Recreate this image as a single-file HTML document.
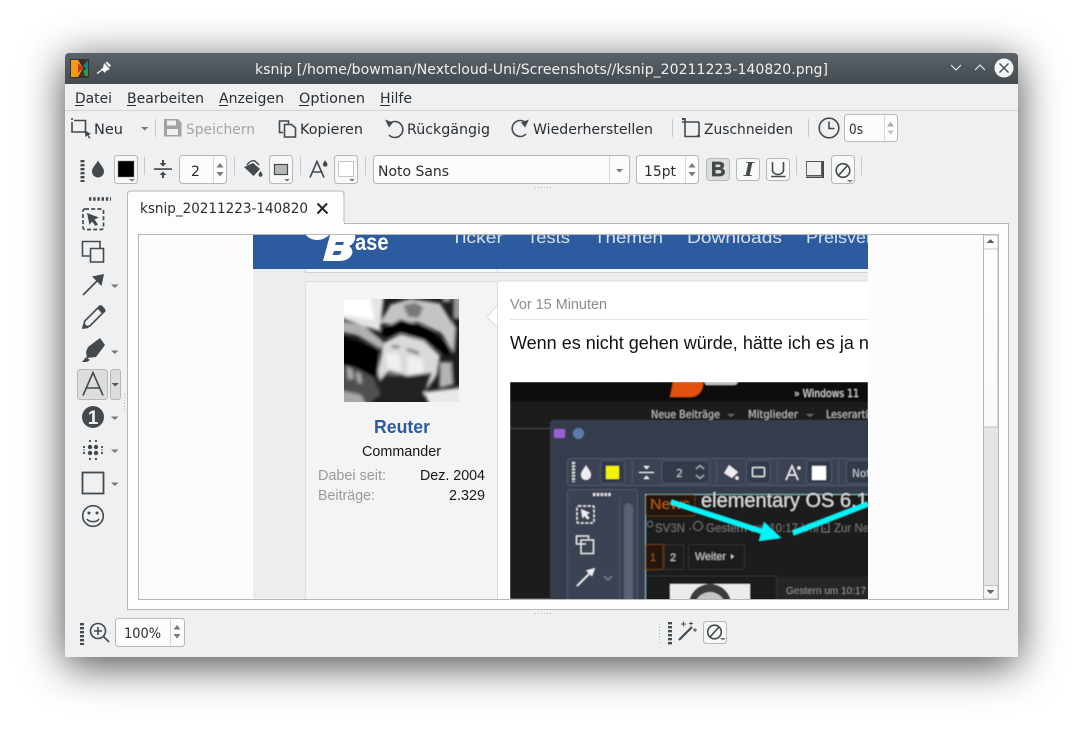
<!DOCTYPE html>
<html><head><meta charset="utf-8"><title>ksnip</title>
<style>
html,body{margin:0;padding:0;width:1083px;height:734px;overflow:hidden;background:#fff}
#win{position:absolute;left:65px;top:53px;width:953px;height:604px;border-radius:4px 4px 0 0;background:#eff0f1;box-shadow:0 8px 42px rgba(0,0,0,.72)}
svg{position:absolute;left:0;top:0}
text{font-family:"DejaVu Sans",sans-serif;font-size:14.5px;fill:#2b2e31;white-space:pre}
.btn{fill:#f7f8f8;stroke:#b5b7b9}
.field{fill:#fcfcfc;stroke:#b5b7b9}
.sep{stroke:#c6c8ca;stroke-width:1}
.ic{fill:none;stroke:#45494c;stroke-width:1.6}
.f{fill:#45494c}
.g{fill:#75787a}
.dots{stroke:#45494c;stroke-width:4;stroke-dasharray:2.4 1.6;fill:none}
</style></head><body>
<div id="win"></div>
<svg width="1083" height="734" viewBox="0 0 1083 734" xmlns="http://www.w3.org/2000/svg">
<defs>
<linearGradient id="tb" x1="0" y1="0" x2="0" y2="1"><stop offset="0" stop-color="#5a6369"/><stop offset="1" stop-color="#434a50"/></linearGradient>
<linearGradient id="tr" x1="0" y1="0" x2="0" y2="1"><stop offset="0" stop-color="#fff"/><stop offset="1" stop-color="#f3f4f4"/></linearGradient>
<filter id="bl" x="-10%" y="-10%" width="120%" height="120%"><feGaussianBlur stdDeviation="5"/></filter>
<filter id="b1"><feGaussianBlur stdDeviation=".4"/></filter>
<clipPath id="cw"><path d="M65 84V57a4 4 0 0 1 4-4H1014a4 4 0 0 1 4 4V84z"/></clipPath>
<clipPath id="cc"><rect x="253" y="235" width="615" height="364"/></clipPath>
<clipPath id="ca"><rect x="344" y="299" width="115" height="103"/></clipPath>
<clipPath id="cd"><rect x="510" y="382" width="358" height="217"/></clipPath>
</defs>

<!-- title bar -->
<rect x="65" y="53" width="953" height="31" fill="url(#tb)" clip-path="url(#cw)"/>
<rect x="70" y="59" width="19" height="19" fill="#3a3030"/>
<path d="M71 60h7l5 8-5 9h-7z" fill="#f59a12"/>
<path d="M78 63l5 5-5 5z" fill="#c9351e"/>
<path d="M83 66l5-6v11l-2-2z" fill="#0c8a86"/>
<path d="M83 71l5-3v8h-3z" fill="#2a9c4b"/>
<path d="M104 63l6 6-4 2-1 2-4-4 2-1zM107 61.500l4 4-1.500 1.500-4-4z" fill="#fcfcfc"/>
<path d="M102.500 69.500l-5.500 4" stroke="#fcfcfc" stroke-width="1.300"/>
<text x="255" y="74" textLength="573" lengthAdjust="spacingAndGlyphs" style="fill:#eff0f1">ksnip [/home/bowman/Nextcloud-Uni/Screenshots//ksnip_20211223-140820.png]</text>
<path d="M951 65l5 5 5-5M975 70l5-5 5 5" fill="none" stroke="#eff0f1" stroke-width="1.100"/>
<circle cx="1004" cy="68" r="9.500" fill="#f4f5f5"/>
<path d="M999.500 63.500l9 9M1008.500 63.500l-9 9" stroke="#4a5157" stroke-width="1.500"/>

<!-- menu -->
<g>
<text x="75" y="103" textLength="37" lengthAdjust="spacingAndGlyphs">Datei</text>
<text x="127" y="103" textLength="77" lengthAdjust="spacingAndGlyphs">Bearbeiten</text>
<text x="219" y="103" textLength="65" lengthAdjust="spacingAndGlyphs">Anzeigen</text>
<text x="299" y="103" textLength="66" lengthAdjust="spacingAndGlyphs">Optionen</text>
<text x="380" y="103" textLength="32" lengthAdjust="spacingAndGlyphs">Hilfe</text>
<path d="M75 105.500h9M127 105.500h9M219 105.500h9M299 105.500h10M380 105.500h10" stroke="#2b2e31"/>
</g>
<path d="M65 110.500H1018" stroke="#d1d3d4"/>

<!-- toolbar 1 -->
<path class="ic" d="M72 118v2M72 122v10h13M74 120.500h11.500v10" stroke-width="1.500"/>
<path class="f" d="M84.500 130l6.500 4-2.500 1 2 3-1.500.5-1.500-3-2 1.500z"/>
<text x="94" y="134" textLength="29" lengthAdjust="spacingAndGlyphs">Neu</text>
<path class="g" d="M141 127h7.500l-3.750 3.500z"/>
<path class="sep" d="M155.500 119v18"/>
<path fill="#a0a2a4" d="M164 119h14l3.500 3.500V136.500H164zM167 120.500v5h9v-5zM167 129v6h11v-6z" fill-rule="evenodd"/>
<text x="186" y="134" textLength="69" lengthAdjust="spacingAndGlyphs" style="fill:#a2a4a6">Speichern</text>
<path class="ic" d="M283 132.500h-3.500V121h9v3M284.500 124.500h7l4 3.500v9h-11z" stroke-width="1.400"/>
<text x="300" y="134" textLength="63" lengthAdjust="spacingAndGlyphs">Kopieren</text>
<path class="ic" d="M389 124a8 8 0 1 1 0 11" stroke-width="1.800"/>
<path class="f" d="M385 119.500l8 3-4 5z"/>
<text x="407" y="134" textLength="83" lengthAdjust="spacingAndGlyphs">Rückgängig</text>
<path class="ic" d="M526 123a8 8 0 1 0 0 11" stroke-width="1.800"/>
<path class="f" d="M529 119.500l-8 3 4 5z"/>
<text x="533" y="134" textLength="120" lengthAdjust="spacingAndGlyphs">Wiederherstellen</text>
<path class="sep" d="M672.500 119v18"/>
<path class="ic" d="M682 122h17M685 118v18.500h14v-14.500" stroke-width="1.400"/>
<path class="f" d="M682 118h3v2h-3zM697 135h3v2h-3z"/>
<text x="704" y="134" textLength="89" lengthAdjust="spacingAndGlyphs">Zuschneiden</text>
<path class="sep" d="M808.500 119v18"/>
<circle cx="829" cy="128" r="9.800" class="ic" stroke-width="1.600"/>
<path class="ic" d="M829 121.500v7h5.500" stroke-width="1.600"/>
<rect x="844.500" y="114.500" width="53" height="27" rx="3" class="field"/>
<path d="M884.500 115v26" stroke="#d6d7d8"/>
<text x="849" y="134" textLength="14" lengthAdjust="spacingAndGlyphs">0s</text>
<path d="M887 126.500h7l-3.500-4.500z" fill="#a6a8aa"/><path d="M887 130.500h7l-3.500 4.500z" fill="#c6c8ca"/>

<!-- toolbar 2 -->
<path class="dots" d="M82.500 160v22"/>
<path class="f" d="M98 160.500c2 4 6 7 6 11 0 3.500-2.800 6-6 6s-6-2.500-6-6c0-4 4-7 6-11z"/>
<rect x="114.500" y="155.500" width="23" height="28" rx="3" class="btn"/>
<rect x="118" y="161" width="16" height="16" fill="#000" stroke="#888" stroke-width=".5"/>
<path class="g" d="M129 179h6l-3 2.500z"/>
<path class="sep" d="M144.500 157v18"/>
<path class="f" d="M154 168.200h18v1.700h-18zM162 160h2v3h-2zM159.500 163h7l-3.500 3.500zM162 175h2v3h-2zM159.500 175h7l-3.500-3.500z"/>
<rect x="179.500" y="155.500" width="47" height="28" rx="3" class="field"/>
<path d="M213.500 156v27" stroke="#d6d7d8"/>
<text x="191" y="176" textLength="9" lengthAdjust="spacingAndGlyphs">2</text>
<path d="M216.500 167.500h7l-3.500-4.500z" fill="#75787a"/><path d="M216.500 172h7l-3.500 4.500z" fill="#75787a"/>
<path class="sep" d="M234.500 157v18"/>
<path class="f" d="M244 167l9-4 7 6-6.500 7z"/>
<path d="M247 165c2-3 5-5 8-4l4 4" fill="none" stroke="#45494c" stroke-width="1.400"/>
<path class="f" d="M260.500 171c1 1.600 2 2.600 2 3.700a2 2 0 0 1-4 0c0-1.100 1-2.100 2-3.700z"/>
<rect x="269.500" y="155.500" width="23" height="28" rx="3" class="btn"/>
<rect x="274.500" y="164.500" width="13" height="10" fill="#b5b7b9" stroke="#45494c" stroke-width="1.200"/>
<path class="g" d="M284 179h6l-3 2.500z"/>
<path class="sep" d="M300.500 157v18"/>
<path class="ic" d="M310 177.500l7-16 7 16M312.500 172h10" stroke-width="2.400"/>
<path class="f" d="M325 160c1 2 2.500 3 2.500 4.500a2.300 2.300 0 0 1-4.600 0c0-1.500 1.300-2.500 2.100-4.500z"/>
<rect x="334.500" y="155.500" width="23" height="28" rx="3" class="btn"/>
<rect x="338.500" y="161.500" width="15" height="15" fill="#fff" stroke="#c4c6c8"/>
<path class="g" d="M349 179h6l-3 2.500z"/>
<path class="sep" d="M365.500 157v18"/>
<rect x="373.500" y="155.500" width="256" height="28" rx="3" class="field"/>
<path d="M609.500 156v27" stroke="#d6d7d8"/>
<text x="378" y="176" textLength="71" lengthAdjust="spacingAndGlyphs">Noto Sans</text>
<path class="g" d="M616 169h7l-3.500 3.500z"/>
<rect x="636.500" y="155.500" width="62" height="28" rx="3" class="field"/>
<path d="M685.500 156v27" stroke="#d6d7d8"/>
<text x="644" y="176" textLength="32" lengthAdjust="spacingAndGlyphs">15pt</text>
<path d="M688.500 167.500h7l-3.500-4.500z" fill="#75787a"/><path d="M688.500 172h7l-3.500 4.500z" fill="#75787a"/>
<rect x="706.500" y="158.500" width="23" height="22" rx="3" fill="#dcdddd" stroke="#b5b7b9"/>
<text x="711" y="176" textLength="14.500" lengthAdjust="spacingAndGlyphs" stroke="#45494c" stroke-width=".7" style="font-family:'Liberation Sans',sans-serif;font-weight:bold;font-size:20.500px;fill:#45494c">B</text>
<rect x="736.500" y="158.500" width="23" height="22" rx="3" class="btn"/>
<text x="743.500" y="176" textLength="10.500" lengthAdjust="spacingAndGlyphs" style="font-family:'Liberation Serif',serif;font-weight:bold;font-style:italic;font-size:21.500px;fill:#45494c">I</text>
<rect x="766.500" y="158.500" width="23" height="22" rx="3" class="btn"/>
<path class="ic" d="M772.500 162v8a5.500 4.500 0 0 0 11 0v-8M771 176.500h14.500" stroke-width="1.700"/>
<path class="sep" d="M796.500 157v18"/>
<path d="M806.500 161.500h15v14h-15z" fill="none" stroke="#55585a" stroke-width=".9"/>
<path class="f" d="M822 161h2v17h-18v-1.500h16z"/>
<rect x="831.500" y="155.500" width="23" height="28" rx="3" class="btn"/>
<circle cx="843" cy="170.500" r="6.800" class="ic" stroke-width="1.300"/><path class="ic" d="M838.500 175.500l9-10" stroke-width="1.300"/>
<path class="g" d="M847 180h6l-3 2.500z"/>
<path class="sep" d="M861.500 157v18"/>
<path d="M535 187.500h16" stroke="#b5b7b9" stroke-dasharray="1 2"/>

<!-- tab panel -->
<rect x="127.500" y="223.500" width="881" height="386" fill="#fdfdfd" stroke="#b5b7b9"/>
<path d="M127.500 224v-30a3 3 0 0 1 3-3H341a3 3 0 0 1 3 3v30z" fill="#fdfdfd" stroke="#b5b7b9"/>
<rect x="128" y="222" width="216" height="3" fill="#fdfdfd"/>
<text x="140" y="213" textLength="168" lengthAdjust="spacingAndGlyphs">ksnip_20211223-140820</text>
<path d="M317.500 203.500l10 10M327 203.500l-9.500 10" stroke="#23262a" stroke-width="2"/>
<rect x="138.500" y="234.500" width="860" height="365" fill="#fcfcfc" stroke="#b5b7b9"/>

<!-- captured image -->
<g clip-path="url(#cc)">
<rect x="253" y="235" width="615" height="365" fill="#ededed"/>
<rect x="305.500" y="281.500" width="192" height="330" rx="3" fill="#f4f4f5" stroke="#dedede"/>
<rect x="498" y="281" width="370" height="320" fill="#fff"/>
<path d="M497.500 281H868" stroke="#dedede"/>
<rect x="305.500" y="258" width="563" height="14.500" fill="#f6f6f6" stroke="#cfcfcf"/>
<path d="M497.500 258v14" stroke="#d4d4d4"/>
<rect x="253" y="235" width="615" height="34" fill="#2c5b9f"/>
<path d="M497 305l-10 12 10 10z" fill="#fff"/>
<path d="M497 305l-10 12 10 10" fill="none" stroke="#dedede"/>
<path d="M306 235c2 3 7 5 11 5 5 0 9-2 12-5z" fill="#fff"/>
<path d="M330 235h25c1 4-1 9-6 11 3 2 4 5 3 8-2 5-7 7-13 7h-16z" fill="#fff"/>
<path d="M336 242h8l-1 3h-8zM334 251h7c1 2-1 4-3 4h-5.500z" fill="#2c5b9f"/>
<text x="355" y="250" textLength="33.500" lengthAdjust="spacingAndGlyphs" style="font-family:'Liberation Sans';font-weight:bold;font-size:23px;fill:#fff">ase</text>
<text x="451" y="243" textLength="52" lengthAdjust="spacingAndGlyphs" style="font-size:17px;fill:#d8e1ee;font-family:'Liberation Sans'">Ticker</text>
<text x="527" y="243" textLength="43" lengthAdjust="spacingAndGlyphs" style="font-size:17px;fill:#d8e1ee;font-family:'Liberation Sans'">Tests</text>
<text x="594" y="243" textLength="69" lengthAdjust="spacingAndGlyphs" style="font-size:17px;fill:#d8e1ee;font-family:'Liberation Sans'">Themen</text>
<text x="687" y="243" textLength="95" lengthAdjust="spacingAndGlyphs" style="font-size:17px;fill:#d8e1ee;font-family:'Liberation Sans'">Downloads</text>
<text x="806" y="243" textLength="66" lengthAdjust="spacingAndGlyphs" style="font-size:17px;fill:#d8e1ee;font-family:'Liberation Sans'">Preisver</text>

<!-- avatar -->
<g clip-path="url(#ca)">
<rect x="344" y="299" width="115" height="103" fill="#1e1e1e"/>
<g transform="translate(344 298) scale(.3333)" filter="url(#bl)">
<path d="M-10-10H120L108 100-10 60z" fill="#e4e4e4"/>
<path d="M-10 0H80L90 65-10 50z" fill="#ffffff"/>
<path d="M-10 68L60 82 118 130 112 155 40 112-10 102z" fill="#b0b0b0"/>
<path d="M-10 112L100 152 108 240-10 200z" fill="#060606"/>
<path d="M-10 200L40 212 90 240 110 290 60 330H-10z" fill="#505050"/>
<path d="M8 205l16 8 6 30-18 0zM35 222l14 4 6 30-14-2z" fill="#aaa"/>
<path d="M-10 278L50 290 72 330H-10z" fill="#a8a8a8"/>
<path d="M328-10h30v70h-30zM296-10h24v22h-24z" fill="#9a9a9a"/>
<path d="M325 60h30v200h-30z" fill="#1c1c1c"/>
<path d="M108 75L140 20 200 2 288 16 334 90 328 165 292 105 220 72 160 82z" fill="#c4c4c4"/>
<path d="M178 22l36-8 24 14-14 32-32-4z" fill="#787878"/>
<path d="M106 100L170 64 250 90 314 142 314 176 240 126 170 102 125 118z" fill="#040404"/>
<path d="M118 135L170 108 240 128 288 172 278 232 250 272 108 264 102 220z" fill="#dadada"/>
<path d="M140 142l24 0 6 6-22 3zM188 150l38 12-2 8-36-12z" fill="#5a5a5a"/>
<path d="M125 165l38 2 10 50-40 4zM190 175l45 8 4 40-48 6z" fill="#f0f0f0"/>
<path d="M104 250L135 216 190 234 264 224 242 292 180 316 108 298z" fill="#222"/>
<path d="M130 220l40 6-6 7-30-2z" fill="#7a7a7a"/>
<path d="M288 192l34 0 4 68-40 10z" fill="#b4b4b4"/>
<path d="M238 282L355 268V330H262z" fill="#e8e8e8"/>
</g></g>

<text x="374" y="433" textLength="56" lengthAdjust="spacingAndGlyphs" style="font-family:'Liberation Sans';font-weight:bold;font-size:18px;fill:#2d5b9d">Reuter</text>
<text x="362" y="456" textLength="79" lengthAdjust="spacingAndGlyphs" style="font-family:'Liberation Sans';font-size:14.500px;fill:#181818">Commander</text>
<text x="318" y="480" textLength="68" lengthAdjust="spacingAndGlyphs" style="font-family:'Liberation Sans';font-size:14.500px;fill:#9a9a9a">Dabei seit:</text>
<text x="420" y="480" textLength="65" lengthAdjust="spacingAndGlyphs" style="font-family:'Liberation Sans';font-size:14.500px;fill:#181818">Dez. 2004</text>
<text x="318" y="500" textLength="57" lengthAdjust="spacingAndGlyphs" style="font-family:'Liberation Sans';font-size:14.500px;fill:#9a9a9a">Beiträge:</text>
<text x="449" y="500" textLength="36" lengthAdjust="spacingAndGlyphs" style="font-family:'Liberation Sans';font-size:14.500px;fill:#181818">2.329</text>
<text x="510" y="309" textLength="97" lengthAdjust="spacingAndGlyphs" style="font-family:'Liberation Sans';font-size:14.500px;fill:#8c8c8c">Vor 15 Minuten</text>
<path d="M510 319.500H868" stroke="#e4e4e4"/>
<text x="510" y="349" style="font-family:'Liberation Sans';font-size:18px;fill:#111">Wenn es nicht gehen würde, hätte ich es ja nicht</text>

<!-- nested dark screenshot -->
<g clip-path="url(#cd)" filter="url(#b1)">
<rect x="510" y="382" width="358" height="217" fill="#1c1c1c"/>
<rect x="510" y="382" width="358" height="20" fill="#0f0f0f"/>
<path d="M735 402c30-2 50-18 90-20h43v20z" fill="#0a0a0a"/>
<path d="M673 382h30c1 7-4 15-12 15h-21z" fill="#e2510f"/>
<path d="M704 382h34c-1 2-2 3-4 3h-28z" fill="#bdbdbd"/>
<text x="794" y="397" textLength="65" lengthAdjust="spacingAndGlyphs" style="font-family:'DejaVu Sans';font-size:10.500px;fill:#d8d8d8">» Windows 11</text>
<text x="651" y="418" textLength="69" lengthAdjust="spacingAndGlyphs" style="font-size:10.500px;fill:#bdbdbd">Neue Beiträge</text>
<path d="M727 414h8l-4 3z" fill="#666"/>
<text x="748" y="418" textLength="50" lengthAdjust="spacingAndGlyphs" style="font-size:10.500px;fill:#bdbdbd">Mitglieder</text>
<path d="M806 414h8l-4 3z" fill="#666"/>
<text x="826" y="418" textLength="42" lengthAdjust="spacingAndGlyphs" style="font-size:10.500px;fill:#bdbdbd">Leserarti</text>
<path d="M510 428.500h40" stroke="#444"/>

<rect x="550" y="420" width="330" height="190" rx="4" fill="#363e4e"/>
<rect x="554" y="429" width="11" height="9" rx="1.500" fill="#9a5fd0"/>
<circle cx="578.500" cy="433.500" r="5.500" fill="#5a7cab"/>
<rect x="567.500" y="458.500" width="320" height="27" rx="3" fill="#3a4252" stroke="#4f586a"/>
<path d="M573.500 462v20" stroke="#ddd" stroke-width="3" stroke-dasharray="2 1.200"/>
<path d="M586 465c1.500 3.500 5 6 5 10a5 5 0 0 1-10 0c0-4 3.500-6.500 5-10z" fill="#eee"/>
<rect x="600.500" y="460.500" width="24" height="23" rx="2.500" fill="#333b4a" stroke="#4f586a"/>
<rect x="606" y="466" width="13" height="13" fill="#f4f400"/>
<path d="M632.500 461v22M716.500 461v22M777.500 461v22M838.500 461v22" stroke="#4f586a"/>
<path d="M639 472.500h15" stroke="#eee"/>
<path d="M643.500 466h6l-3 3.500zM643.500 479h6l-3-3.500z" fill="#eee"/>
<rect x="661.500" y="460.500" width="48" height="23" rx="2.500" fill="#333b4a" stroke="#4f586a"/>
<text x="676" y="477" style="font-size:11px;fill:#bfc4cc">2</text>
<path d="M696 469l4-3.500 4 3.500M696 475l4 3.500 4-3.500" fill="none" stroke="#c4c8d0"/>
<path d="M729 465l9 7-6 6-8-5 2-3z" fill="#eee"/><circle cx="737" cy="478" r="1.800" fill="#eee"/>
<rect x="746.500" y="460.500" width="24" height="23" rx="2.500" fill="#333b4a" stroke="#4f586a"/>
<rect x="752.500" y="467.500" width="12" height="9" rx="1" fill="none" stroke="#eee" stroke-width="1.200"/>
<path d="M786 480l6-14 6 14M788 475h8" fill="none" stroke="#eee" stroke-width="1.500"/><circle cx="799" cy="468" r="1.700" fill="#eee"/>
<rect x="806.500" y="460.500" width="25" height="23" rx="2.500" fill="#333b4a" stroke="#4f586a"/>
<rect x="812" y="466" width="14" height="14" fill="#fff"/>
<rect x="846.500" y="460.500" width="40" height="23" rx="2.500" fill="#333b4a" stroke="#4f586a"/>
<text x="852" y="477" style="font-size:10.500px;fill:#bfc4cc">Not</text>

<rect x="567.500" y="489.500" width="70" height="130" rx="3" fill="#3a4252" stroke="#4f586a"/>
<path d="M593 494.500h19" stroke="#ddd" stroke-width="3" stroke-dasharray="2.500 1.300"/>
<path d="M619.500 497v102" stroke="#4a5364"/>
<rect x="624" y="503" width="9" height="120" rx="4.500" fill="#596272"/>
<rect x="577" y="506" width="17" height="17" rx="1.500" fill="none" stroke="#eee" stroke-width="1.500" stroke-dasharray="3 1.600"/>
<path d="M581 509l9 4-3.500 1.500 3 3.500-2 1.500-3-3.500-2 2.500z" fill="#eee"/>
<path d="M586 544h-9.500v-8h12v3M581 540h12.500v13.500H581z" fill="none" stroke="#eee" stroke-width="1.300"/>
<path d="M577 586l14-14" stroke="#eee" stroke-width="1.600"/><path d="M595 568l-9 2.500 6 6z" fill="#eee"/>
<path d="M604 576l4 4 4-4" fill="none" stroke="#8a90a0"/>

<rect x="645.500" y="494.500" width="240" height="120" fill="#1e1e1e" stroke="#7db0b0"/>
<rect x="646" y="495" width="49" height="21" rx="2" fill="#241608" stroke="#5e300f"/>
<text x="650" y="509" textLength="40" lengthAdjust="spacingAndGlyphs" style="font-family:'Liberation Sans';font-size:15px;fill:#b35c12">News</text>
<text x="701" y="507" style="font-family:'Liberation Sans';font-size:20px;fill:#dcdcdc">elementary OS 6.1</text>
<circle cx="650" cy="524" r="2.800" fill="none" stroke="#666"/>
<text x="655" y="532" style="font-family:'Liberation Sans';font-size:11.500px;fill:#6f6f6f">SV3N · </text>
<circle cx="698" cy="526" r="4.500" fill="none" stroke="#6f6f6f"/>
<text x="706" y="532" style="font-family:'Liberation Sans';font-size:11.500px;fill:#6f6f6f">Gestern um 10:17 Uhr ·</text>
<rect x="822" y="523" width="7" height="9" fill="none" stroke="#6f6f6f"/>
<text x="834" y="532" style="font-family:'Liberation Sans';font-size:11.500px;fill:#6f6f6f">Zur Ne</text>
<rect x="646" y="544.500" width="17" height="25" fill="#22170d" stroke="#6a3a14"/>
<text x="650" y="561" style="font-family:'Liberation Sans';font-size:11px;fill:#a0580f">1</text>
<rect x="664.500" y="544.500" width="19" height="25" fill="#1b1b1b" stroke="#333"/>
<text x="670" y="561" style="font-family:'Liberation Sans';font-size:11px;fill:#c8c8c8">2</text>
<rect x="688.500" y="544.500" width="56" height="25" rx="2" fill="#1b1b1b" stroke="#333"/>
<text x="695" y="560" textLength="31" lengthAdjust="spacingAndGlyphs" style="font-family:'Liberation Sans';font-size:11px;fill:#c8c8c8">Weiter</text>
<path d="M731 554l3 2.500-3 2.500z" fill="#ccc"/>
<path d="M646 576h130M776.500 576v28" stroke="#333"/>
<rect x="777" y="577" width="92" height="25" fill="#252525"/>
<rect x="670" y="584" width="80" height="20" fill="#ececec"/>
<ellipse cx="710" cy="604" rx="21" ry="20" fill="#3a3a3a"/>
<ellipse cx="710" cy="611" rx="17" ry="19" fill="#c4c4c4"/>
<text x="786" y="594" textLength="80" lengthAdjust="spacingAndGlyphs" style="font-family:'Liberation Sans';font-size:10.500px;fill:#8a8a8a">Gestern um 10:17</text>
<path d="M671 502L770 534M793 533L868 504" stroke="#00f6f8" stroke-width="5"/>
<path d="M764 522L781 538L759 541z" fill="#00f6f8"/>
</g>
</g>

<!-- scrollbar -->
<rect x="983.500" y="235" width="14.500" height="364" fill="url(#tr)" stroke="#b5b7b9"/>
<rect x="984" y="427" width="14" height="159" fill="#e3e4e4"/>
<path d="M983.500 427h14.500M983.500 249h14.500M983.500 585.500h14.500" stroke="#c0c2c3"/>
<path d="M986.500 243h8l-4-4z" fill="#606366"/>
<path d="M986.500 590h8l-4 4z" fill="#606366"/>

<!-- left toolbar -->
<path d="M89 199h22" stroke="#45494c" stroke-width="3.500" stroke-dasharray="2.400 1.800"/>
<rect x="83" y="209" width="20.500" height="20.500" rx="2" fill="none" stroke="#45494c" stroke-width="1.700" stroke-dasharray="4 2.200"/>
<path class="f" d="M87 213l12 4.500-4.500 2 3.500 5-2.500 1.500-3.500-4.500-2.500 3.500z"/>
<path class="ic" d="M90 256h-7.500v-14.500h17.500v7" stroke-width="1.500"/>
<path class="ic" d="M90.500 248.500h13v13.500h-13z" stroke-width="1.500"/>
<path class="ic" d="M83 295l17-17" stroke-width="2.300"/>
<path class="f" d="M104 274l-12 2.500 9.500 9.500z"/>
<path class="g" d="M111 284.500h7.500l-3.750 3.500z"/>
<path class="ic" d="M83 327.500l1.800-6.500 15-15 5 5-15 15z" stroke-width="1.500"/>
<path class="f" d="M82.500 329l1.500-6 5 5zM97.500 308.500l4-3.500 4 4.500-3.500 4z"/>
<path class="f" d="M88 347l12-9 5 7-9 12-9 1-1-6zM82 362l4-5 4 3-3 2z"/>
<path class="g" d="M111 350.500h7.500l-3.750 3.500z"/>
<rect x="77.500" y="369.500" width="30" height="30" rx="3" fill="#dcdddd" stroke="#b5b7b9"/>
<rect x="110.500" y="369.500" width="10" height="30" rx="2.500" fill="#dcdddd" stroke="#b5b7b9"/>
<path class="ic" d="M83 395.500l10-23 10 23M86.500 388h13" stroke-width="2.300"/>
<path d="M111.500 383h7.500l-3.750 3.500z" fill="#55585a"/>
<path d="M124.500 394v16" stroke="#b5b7b9" stroke-dasharray="1 2"/>
<circle cx="93" cy="417" r="11" fill="#45494c"/>
<text x="93" y="424" text-anchor="middle" style="font-family:'Liberation Sans',sans-serif;font-weight:bold;font-size:19px;fill:#eff0f1">1</text>
<path class="g" d="M111 416.500h7.500l-3.750 3.500z"/>
<g class="f">
<circle cx="90" cy="447" r="2.200"/><circle cx="96" cy="447" r="2.200"/><circle cx="90" cy="453" r="2.200"/><circle cx="96" cy="453" r="2.200"/>
<circle cx="84" cy="447" r="1.100"/><circle cx="102" cy="447" r="1.100"/><circle cx="84" cy="453" r="1.100"/><circle cx="102" cy="453" r="1.100"/>
<circle cx="90" cy="441" r="1.100"/><circle cx="96" cy="441" r="1.100"/><circle cx="90" cy="459" r="1.100"/><circle cx="96" cy="459" r="1.100"/>
<circle cx="84" cy="450" r=".7"/><circle cx="102" cy="450" r=".7"/>
</g>
<path class="g" d="M111 449.500h7.500l-3.750 3.500z"/>
<rect x="82.500" y="472.500" width="21" height="21" fill="none" stroke="#45494c" stroke-width="1.800"/>
<path class="g" d="M111 482.500h7.500l-3.750 3.500z"/>
<circle cx="93" cy="516" r="10.300" class="ic" stroke-width="1.800"/>
<circle cx="89" cy="513" r="1.500" class="f"/><circle cx="97" cy="513" r="1.500" class="f"/>
<path class="ic" d="M87 519c2 3.500 10 3.500 12 0" stroke-width="1.500"/>

<!-- bottom -->
<path d="M535 613.500h16" stroke="#b5b7b9" stroke-dasharray="1 2"/>
<path class="dots" d="M82 623v22"/>
<circle cx="98" cy="631" r="7.500" class="ic" stroke-width="1.500"/>
<path class="ic" d="M98 627v8M94 631h8" stroke-width="1.300"/>
<path class="ic" d="M103.500 636.500l5.500 5.500" stroke-width="1.800"/>
<rect x="115.500" y="618.500" width="69" height="28" rx="3" class="field"/>
<path d="M170.500 619v27" stroke="#d6d7d8"/>
<text x="124" y="638" textLength="37" lengthAdjust="spacingAndGlyphs">100%</text>
<path d="M173.500 629.500h7l-3.500-4.500z" fill="#75787a"/><path d="M173.500 634h7l-3.500 4.500z" fill="#75787a"/>
<path d="M659.500 624v20" stroke="#b5b7b9" stroke-dasharray="1 2"/>
<path class="dots" d="M670 622v23"/>
<path d="M679 640l13-13" stroke="#45494c" stroke-width="2.200"/>
<path d="M681 624h5M683.500 621.500v5M691 621.500v4M689 623.500h4M693 630h4M695 628v4" stroke="#45494c" stroke-width=".9"/>
<rect x="703.500" y="621.500" width="23" height="22" rx="3" class="btn"/>
<circle cx="714.500" cy="632" r="6.800" class="ic" stroke-width="1.300"/><path class="ic" d="M710 637l9-10" stroke-width="1.300"/>
<path class="g" d="M720 638h6l-3 2.500z"/>
</svg>
</body></html>
